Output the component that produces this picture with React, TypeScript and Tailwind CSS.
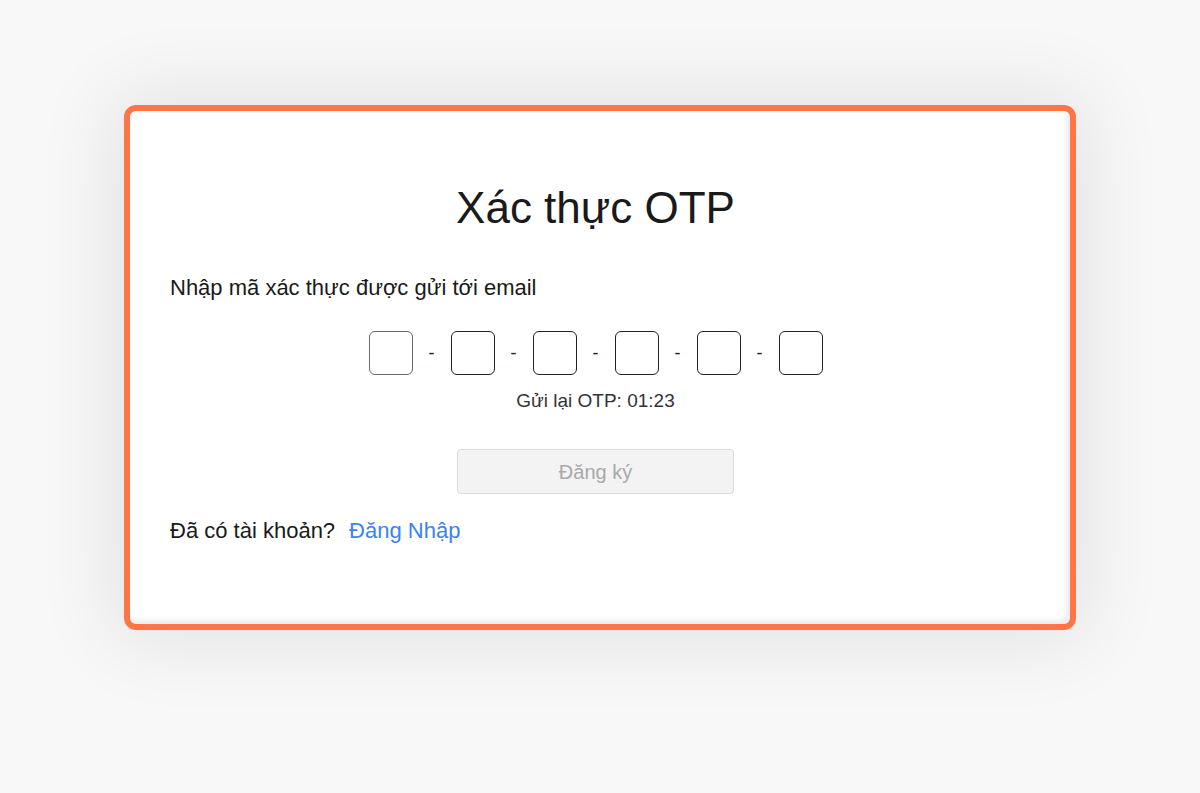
import React from "react";

const OTP_LENGTH = 6;

function OtpInputs() {
    return (
        <div className="flex items-center justify-center">
            {Array.from({ length: OTP_LENGTH }).map((_, i) => (
                <React.Fragment key={i}>
                    {i > 0 && (
                        <span className="w-[38px] text-center text-[18px] text-[#222]">-</span>
                    )}
                    <input
                        type="text"
                        maxLength={1}
                        className={`h-[44px] w-[44px] rounded-[6px] border bg-white text-center text-[20px] outline-none ${
                            i === 0 ? "border-[#6b6b6b]" : "border-[#222]"
                        }`}
                    />
                </React.Fragment>
            ))}
        </div>
    );
}

export default function App() {
    return (
        <div
            className="min-h-[793px] w-full bg-[#f8f8f8] pt-[105px]"
            style={{ fontFamily: '"Liberation Sans", Arial, sans-serif' }}
        >
            <div className="mx-auto w-[952px] rounded-[12px] border-[6px] border-[#ff7547] bg-white shadow-[0_0_80px_12px_rgba(0,0,0,0.09)]">
                <div className="rounded-[7px] pb-[80px] pl-[40px] pr-[49px] pt-[71px] shadow-[inset_-4px_-4px_5px_rgba(0,0,0,0.07)]">
                    <h1 className="text-center text-[44px] leading-[52px] text-[#1a1a1a]">
                        Xác thực OTP
                    </h1>
                    <p className="mt-[41px] text-[22px] leading-[26px] text-[#1a1a1a]">
                        Nhập mã xác thực được gửi tới email
                    </p>
                    <div className="mt-[30px]">
                        <OtpInputs />
                    </div>
                    <p className="mt-[15px] text-center text-[19px] leading-[22px] text-[#333]">
                        Gửi lại OTP: 01:23
                    </p>
                    <div className="mt-[37px] flex justify-center">
                        <button
                            disabled
                            className="h-[45px] w-[277px] rounded-[4px] border border-[#dcdcdc] bg-[#f3f3f3] text-[20px] text-[#a9a9a9]"
                        >
                            Đăng ký
                        </button>
                    </div>
                    <div className="mt-[24px] flex items-center gap-[14px] text-[22px] leading-[26px]">
                        <span className="text-[#1a1a1a]">Đã có tài khoản?</span>
                        <a href="#" className="text-[#3b82f6]">
                            Đăng Nhập
                        </a>
                    </div>
                </div>
            </div>
        </div>
    );
}
